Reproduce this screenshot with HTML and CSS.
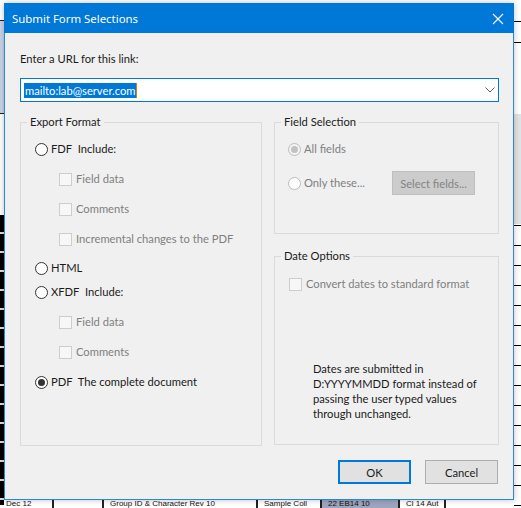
FILE: index.html
```html
<!DOCTYPE html>
<html>
<head>
<meta charset="utf-8">
<link rel="stylesheet" href="styles.css">
</head>
<body>
<div class="desktop">
  <div class="bg-left-top"></div>
  <div class="bg-left-dark"></div>
  <div class="bg-right-lines"></div>
  <div class="bg-right-gray"></div>
  <div class="bg-bottom">
    <span class="cell">Dec 12</span>
    <span class="cell">&nbsp;</span>
    <span class="cell">Group ID &amp; Character Rev 10</span>
    <span class="cell">Sample Coll</span>
    <span class="cell sel">22 EB14 10</span>
    <span class="cell">Cl 14 Aut</span>
  </div>

  <div class="dialog">
    <div class="titlebar">
      <span class="title">Submit Form Selections</span>
      <svg class="close" width="12" height="12" viewBox="0 0 12 12"><path d="M1 1 L11 11 M11 1 L1 11" stroke="#fff" stroke-width="1.1" fill="none"/></svg>
    </div>
    <div class="body">
      <div class="url-label">Enter a URL for this link:</div>
      <div class="combo">
        <span class="sel-text">mailto:lab@server.com</span><span class="caret"></span>
        <svg class="chev" width="10" height="6" viewBox="0 0 10 6"><path d="M0.5 0.5 L5 5 L9.5 0.5" stroke="#606060" stroke-width="1" fill="none"/></svg>
      </div>

      <div class="groups">
        <div class="group export">
          <span class="group-title">Export Format</span>
          <div class="row"><span class="radio"></span><span class="lbl">FDF&nbsp; Include:</span></div>
          <div class="row sub"><span class="check"></span><span class="lbl dis">Field data</span></div>
          <div class="row sub"><span class="check"></span><span class="lbl dis">Comments</span></div>
          <div class="row sub"><span class="check"></span><span class="lbl dis">Incremental changes to the PDF</span></div>
          <div class="row tight-a"><span class="radio"></span><span class="lbl">HTML</span></div>
          <div class="row tight-b"><span class="radio"></span><span class="lbl">XFDF&nbsp; Include:</span></div>
          <div class="row sub"><span class="check"></span><span class="lbl dis">Field data</span></div>
          <div class="row sub"><span class="check"></span><span class="lbl dis">Comments</span></div>
          <div class="row"><span class="radio on"></span><span class="lbl">PDF&nbsp; The complete document</span></div>
        </div>

        <div class="right-col">
          <div class="group fields">
            <span class="group-title">Field Selection</span>
            <div class="row"><span class="radio disabled on"></span><span class="lbl dis">All fields</span></div>
            <div class="row only">
              <span class="radio disabled"></span><span class="lbl dis">Only these...</span>
              <span class="sel-btn">Select fields...</span>
            </div>
          </div>
          <div class="group dates">
            <span class="group-title">Date Options</span>
            <div class="row"><span class="check"></span><span class="lbl dis">Convert dates to standard format</span></div>
            <p class="note">Dates are submitted in<br>D:YYYYMMDD format instead of<br>passing the user typed values<br>through unchanged.</p>
          </div>
        </div>
      </div>

      <div class="buttons">
        <span class="btn ok">OK</span>
        <span class="btn">Cancel</span>
      </div>
    </div>
  </div>
</div>
</body>
</html>
```
FILE: styles.css
```css
html, body {
  margin: 0;
  padding: 0;
  background: #ffffff;
}
.desktop {
  position: relative;
  width: 521px;
  height: 508px;
  overflow: hidden;
  background: #ffffff;
  font-family: Lato, "Open Sans", sans-serif;
}
.bg-left-top {
  position: absolute;
  left: 0; top: 20px;
  width: 4px; height: 92px;
  background: #c9d3ea;
  border-top: 1px solid #222;
  border-bottom: 1px solid #222;
}
.bg-left-dark {
  position: absolute;
  left: 0; top: 215px;
  width: 4px; height: 290px;
  background: repeating-linear-gradient(#000 0 17px, #ddd 17px 19px);
}
.bg-right-lines {
  position: absolute;
  right: 0; top: 0;
  width: 7px; height: 508px;
  background:
    linear-gradient(#000, #000) 0 21px / 7px 1px no-repeat,
    linear-gradient(#000, #000) 0 42px / 7px 1px no-repeat,
    repeating-linear-gradient(transparent 0 19px, #000 19px 20px) 0 206px / 7px 300px no-repeat;
}
.bg-right-gray {
  position: absolute;
  right: 0; top: 114px;
  width: 7px; height: 110px;
  background: #e3e3e3;
}
.bg-bottom {
  position: absolute;
  left: 0; top: 500px;
  width: 521px; height: 8px;
  display: flex;
  font: 8px/8px "Liberation Sans", sans-serif;
  color: #111;
  white-space: nowrap;
  overflow: hidden;
}
.bg-bottom .cell {
  padding: 0 6px;
  border-right: 2px solid #222;
  flex: none;
}
.bg-bottom .cell:nth-child(1) { width: 40px; }
.bg-bottom .cell:nth-child(2) { width: 36px; }
.bg-bottom .cell:nth-child(3) { width: 140px; }
.bg-bottom .cell:nth-child(4) { width: 50px; }
.bg-bottom .cell.sel { width: 64px; background: #9ea6bf; }

.dialog {
  position: absolute;
  left: 4px; top: 3px;
  width: 510px; height: 497px;
  box-sizing: border-box;
  border: 1px solid #2b88d8;
  background: #f0f0f0;
  display: flex;
  flex-direction: column;
  box-shadow: 0 0 6px rgba(0,0,0,0.25);
}
.titlebar {
  height: 30px;
  flex: none;
  background: #0078d7;
  color: #fff;
  display: flex;
  align-items: center;
  justify-content: space-between;
  padding: 0 10px 0 8px;
  margin: -1px -1px 0 -1px;
}
.title {
  font-family: "Noto Sans", "Open Sans", sans-serif;
  font-size: 11.4px;
  padding-top: 1px;
}
.close { display: block; margin-top: 1px; }

.body {
  padding: 0 14px 0 15px;
  display: flex;
  flex-direction: column;
  color: #1b1b1b;
  font-size: 11.2px;
}
.url-label {
  margin-top: 18px;
  height: 16px;
  line-height: 16px;
}
.combo {
  margin-top: 11px;
  height: 24px;
  box-sizing: border-box;
  border: 1px solid #0078d7;
  background: #fff;
  display: flex;
  align-items: center;
  padding-left: 3px;
  padding-right: 3px;
}
.sel-text {
  background: #0078d7;
  color: #fff;
  line-height: 15px;
  height: 15px;
  padding: 0 1px;
}
.caret {
  width: 1px; height: 15px;
  background: #c8801a;
}
.chev { margin-left: auto; }

.groups {
  margin-top: 20px;
  display: grid;
  grid-template-columns: 242px 225px;
  column-gap: 12px;
}
.group {
  position: relative;
  border: 1px solid #dadada;
  box-sizing: border-box;
}
.group-title {
  position: absolute;
  left: 6px; top: -9px;
  padding: 0 3px;
  background: #f0f0f0;
  line-height: 16px;
  color: #1b1b1b;
}
.export {
  height: 324px;
  padding: 14px 0 0 14px;
}
.row {
  display: flex;
  align-items: center;
  height: 24px;
  margin-bottom: 6px;
}
.row.tight-a { margin-top: -1px; margin-bottom: 0; }
.row.sub { padding-left: 24px; }
.lbl { margin-left: 3px; line-height: 16px; }
.lbl.dis { color: #7f7f7f; }
.check + .lbl { margin-left: 4px; }

.radio {
  width: 13px; height: 13px;
  box-sizing: border-box;
  border: 1px solid #333;
  border-radius: 50%;
  background: #fff;
  flex: none;
  display: flex;
  align-items: center;
  justify-content: center;
}
.radio.on::after {
  content: "";
  width: 7px; height: 7px;
  border-radius: 50%;
  background: #333;
}
.radio.disabled {
  border-color: #bcbcbc;
  background: #fff;
}
.radio.disabled.on { background: #f4f4f4; }
.radio.disabled.on::after { background: #c2c2c2; }
.check {
  width: 13px; height: 13px;
  box-sizing: border-box;
  border: 1px solid #cdcdcd;
  background: #f7f7f7;
  flex: none;
}

.right-col {
  display: flex;
  flex-direction: column;
  gap: 22px;
}
.fields {
  height: 112px;
  padding: 14px 0 0 13px;
}
.fields .row.only { margin-top: 10px; }
.only .lbl { width: 88px; flex: none; }
.sel-btn {
  width: 83px; height: 24px;
  box-sizing: border-box;
  border: 1px solid #bfbfbf;
  background: #cccccc;
  color: #838383;
  display: flex;
  align-items: center;
  justify-content: center;
}
.dates {
  height: 189px;
  padding: 14px 0 0 14px;
}
.dates .row { height: 26px; }
.note {
  margin: 64px 0 0 24px;
  line-height: 15px;
  color: #1b1b1b;
}

.buttons {
  margin-top: 14px;
  display: flex;
  justify-content: flex-end;
  gap: 14px;
  padding-right: 1px;
}
.btn {
  width: 73px; height: 24px;
  box-sizing: border-box;
  border: 1px solid #adadad;
  background: #e1e1e1;
  display: flex;
  align-items: center;
  justify-content: center;
  color: #1b1b1b;
}
.btn.ok {
  border: 2px solid #0078d7;
}
```
